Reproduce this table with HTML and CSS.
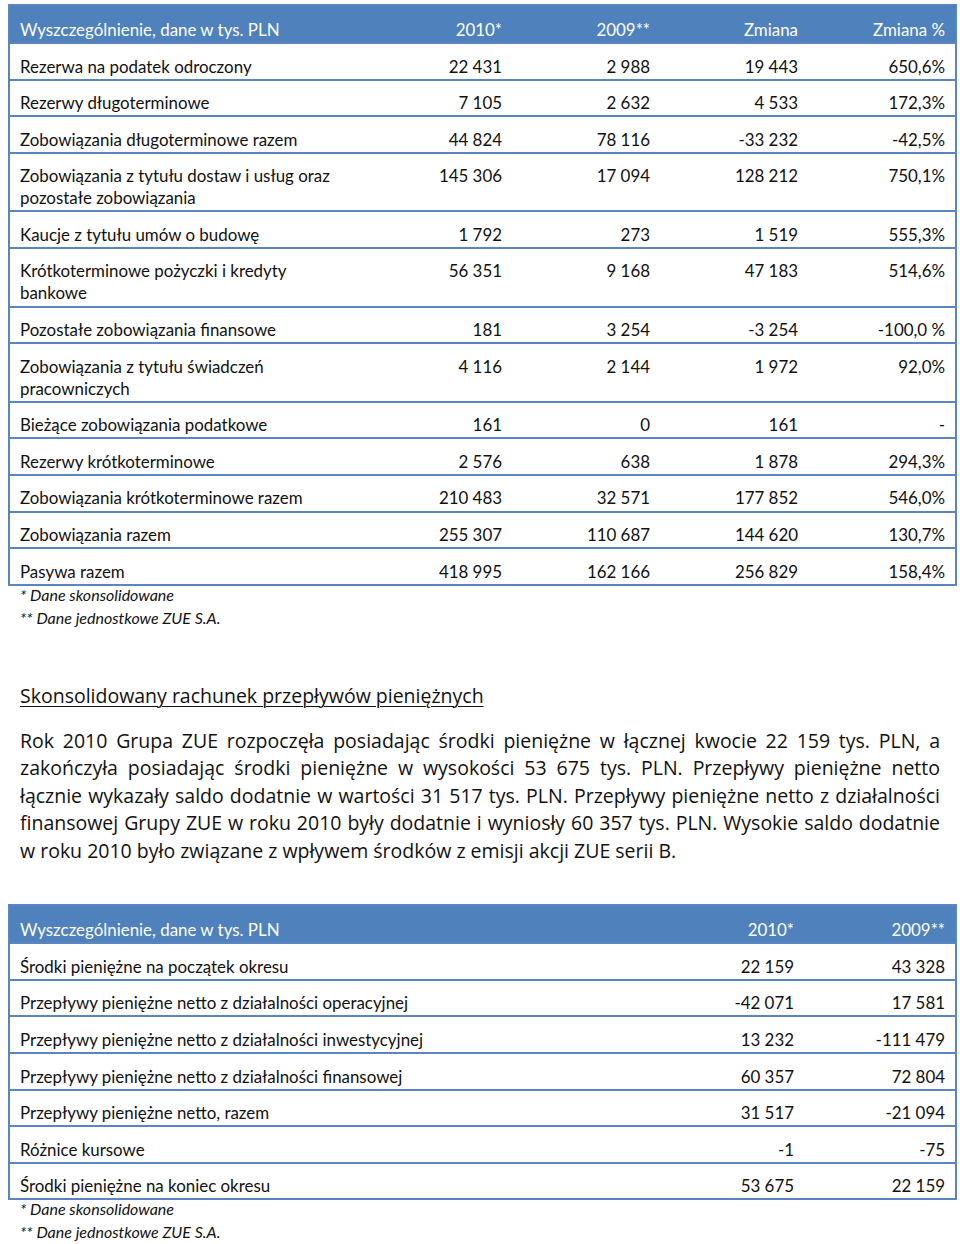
FILE: index.html
```html
<!DOCTYPE html>
<html lang="pl">
<head>
<meta charset="utf-8">
<title>Zobowiązania i przepływy</title>
<link rel="stylesheet" href="styles.css">
</head>
<body>
<table class="fin fin-5">
  <colgroup>
    <col class="c-label"><col class="c-num"><col class="c-num"><col class="c-num"><col class="c-num">
  </colgroup>
  <thead>
    <tr><th>Wyszczególnienie, dane w tys. PLN</th><th>2010*</th><th>2009**</th><th>Zmiana</th><th>Zmiana %</th></tr>
  </thead>
  <tbody>
    <tr><td>Rezerwa na podatek odroczony</td><td>22 431</td><td>2 988</td><td>19 443</td><td>650,6%</td></tr>
    <tr><td>Rezerwy długoterminowe</td><td>7 105</td><td>2 632</td><td>4 533</td><td>172,3%</td></tr>
    <tr><td>Zobowiązania długoterminowe razem</td><td>44 824</td><td>78 116</td><td>-33 232</td><td>-42,5%</td></tr>
    <tr><td>Zobowiązania z tytułu dostaw i usług oraz pozostałe zobowiązania</td><td>145 306</td><td>17 094</td><td>128 212</td><td>750,1%</td></tr>
    <tr><td>Kaucje z tytułu umów o budowę</td><td>1 792</td><td>273</td><td>1 519</td><td>555,3%</td></tr>
    <tr><td>Krótkoterminowe pożyczki i kredyty bankowe</td><td>56 351</td><td>9 168</td><td>47 183</td><td>514,6%</td></tr>
    <tr><td>Pozostałe zobowiązania finansowe</td><td>181</td><td>3 254</td><td>-3 254</td><td>-100,0 %</td></tr>
    <tr><td>Zobowiązania z tytułu świadczeń pracowniczych</td><td>4 116</td><td>2 144</td><td>1 972</td><td>92,0%</td></tr>
    <tr><td>Bieżące zobowiązania podatkowe</td><td>161</td><td>0</td><td>161</td><td>-</td></tr>
    <tr><td>Rezerwy krótkoterminowe</td><td>2 576</td><td>638</td><td>1 878</td><td>294,3%</td></tr>
    <tr><td>Zobowiązania krótkoterminowe razem</td><td>210 483</td><td>32 571</td><td>177 852</td><td>546,0%</td></tr>
    <tr><td>Zobowiązania razem</td><td>255 307</td><td>110 687</td><td>144 620</td><td>130,7%</td></tr>
    <tr><td>Pasywa razem</td><td>418 995</td><td>162 166</td><td>256 829</td><td>158,4%</td></tr>
  </tbody>
</table>
<div class="notes">
  <p>* Dane skonsolidowane</p>
  <p>** Dane jednostkowe ZUE S.A.</p>
</div>

<h2 class="section-title">Skonsolidowany rachunek przepływów pieniężnych</h2>
<p class="lead">Rok 2010 Grupa ZUE rozpoczęła posiadając środki pieniężne w łącznej kwocie 22 159 tys. PLN, a zakończyła posiadając środki pieniężne w wysokości 53 675 tys. PLN. Przepływy pieniężne netto łącznie wykazały saldo dodatnie w wartości 31 517 tys. PLN. Przepływy pieniężne netto z działalności finansowej Grupy ZUE w roku 2010 były dodatnie i wyniosły 60 357 tys. PLN. Wysokie saldo dodatnie w roku 2010 było związane z wpływem środków z emisji akcji ZUE serii B.</p>

<table class="fin fin-3">
  <colgroup>
    <col class="c-label"><col class="c-num2"><col class="c-num3">
  </colgroup>
  <thead>
    <tr><th>Wyszczególnienie, dane w tys. PLN</th><th>2010*</th><th>2009**</th></tr>
  </thead>
  <tbody>
    <tr><td>Środki pieniężne na początek okresu</td><td>22 159</td><td>43 328</td></tr>
    <tr><td>Przepływy pieniężne netto z działalności operacyjnej</td><td>-42 071</td><td>17 581</td></tr>
    <tr><td>Przepływy pieniężne netto z działalności inwestycyjnej</td><td>13 232</td><td>-111 479</td></tr>
    <tr><td>Przepływy pieniężne netto z działalności finansowej</td><td>60 357</td><td>72 804</td></tr>
    <tr><td>Przepływy pieniężne netto, razem</td><td>31 517</td><td>-21 094</td></tr>
    <tr><td>Różnice kursowe</td><td>-1</td><td>-75</td></tr>
    <tr><td>Środki pieniężne na koniec okresu</td><td>53 675</td><td>22 159</td></tr>
  </tbody>
</table>
<div class="notes">
  <p>* Dane skonsolidowane</p>
  <p>** Dane jednostkowe ZUE S.A.</p>
</div>
</body>
</html>
```

FILE: styles.css
```css
html, body {
  margin: 0;
  padding: 0;
  background: #ffffff;
}

body {
  padding: 4px 0 0 8px;
  font-family: "Lato", "Liberation Sans", sans-serif;
  color: #111111;
}

.fin {
  width: 947px;
  border-collapse: collapse;
  table-layout: fixed;
  border: 2px solid #5b85c0;
  font-size: 16.9px;
}

.fin-5 .c-label { width: 355px; }
.fin-5 .c-num { width: 148px; }

.fin-3 .c-label { width: 644px; }
.fin-3 .c-num2 { width: 151px; }
.fin-3 .c-num3 { width: 152px; }

.fin th {
  background: #4f81bd;
  color: #ffffff;
  font-weight: normal;
  text-align: right;
  line-height: 22px;
  padding: 13px 10px 1px 10px;
}

.fin th:first-child { text-align: left; }

.fin td {
  line-height: 22px;
  padding: 11.5px 10px 1.1px 10px;
  text-align: right;
  vertical-align: top;
  border-top: 2px solid #5b85c0;
}

.fin td:first-child {
  text-align: left;
  padding-right: 22px;
}

.notes {
  margin-top: -3px;
  padding-left: 12px;
  font-style: italic;
  font-size: 16px;
  line-height: 23px;
}

.notes p { margin: 0; }

.section-title {
  margin: 53px 0 0 12px;
  font-family: "Open Sans", "Liberation Sans", sans-serif;
  font-weight: normal;
  font-size: 19.5px;
  line-height: 28px;
  text-decoration: underline;
  text-decoration-thickness: 1px;
  text-underline-offset: 3px;
}

.lead {
  margin: 17px 0 0 12px;
  width: 920px;
  font-family: "Open Sans", "Liberation Sans", sans-serif;
  font-size: 19.5px;
  line-height: 27.5px;
  text-align: justify;
}

.fin-3 { margin-top: 40px; }
```
